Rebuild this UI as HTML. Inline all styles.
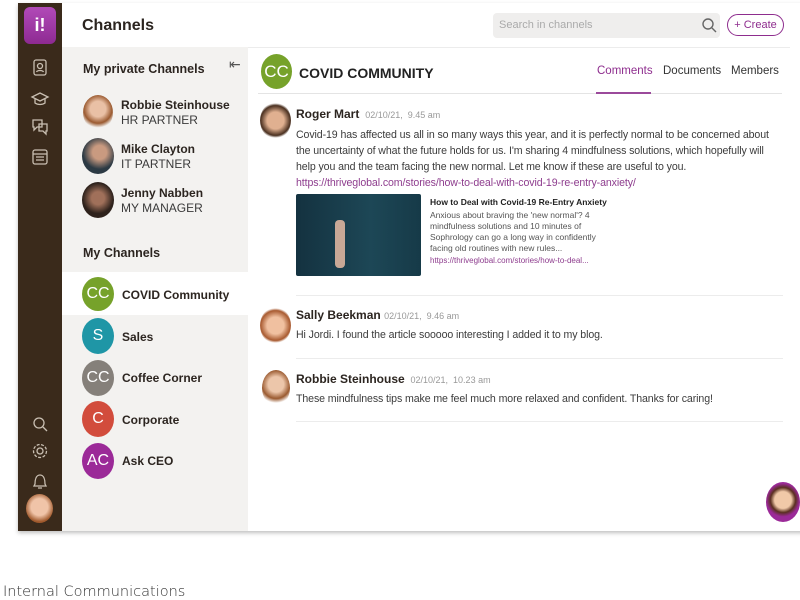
<!DOCTYPE html>
<html><head><meta charset="utf-8"><style>
*{margin:0;padding:0;box-sizing:border-box}
body{width:800px;height:600px;background:#fff;font-family:"Liberation Sans",sans-serif;position:relative;overflow:hidden;color:#2a2a2a}
.a{position:absolute}
.win{left:18px;top:3px;width:790px;height:528px;box-shadow:0 2px 4px rgba(0,0,0,.25);background:#fff}
.side{left:18px;top:3px;width:44px;height:528px;background:#3a2a1b}
.panel{left:62px;top:47px;width:186px;height:484px;background:#f3f2f0}
.b{font-weight:bold}
.av{border-radius:50%;color:#fff;font-size:16px;text-align:center}
.nm{font-size:12px;font-weight:bold;color:#2c2520}
.sub{font-size:12px;color:#3a3a3a}
.ph{border-radius:50%}
.msg{font-size:10.6px;line-height:16px;color:#3c3c3c;letter-spacing:-0.1px;white-space:nowrap}
.dt{font-size:9px;color:#999;font-weight:normal}
.ic{stroke:#c9bfb2;fill:none;stroke-width:1.3}
.ln{height:1px;background:#ececec}
</style></head><body>
<div class="a win"></div>
<div class="a side"></div>
<div class="a" style="left:24px;top:7px;width:32px;height:37px;border-radius:6px;background:linear-gradient(#b14ab8,#8e2a92);color:#fff;font-size:18px;text-align:center;line-height:37px;font-weight:bold">i!</div>
<svg class="a" style="left:30px;top:58px" width="20" height="110" viewBox="0 0 20 110">
<g class="ic"><rect x="4" y="2" width="12" height="15" rx="2"/><circle cx="10" cy="8" r="2.5"/><path d="M6.5 14c1-2 6-2 7 0"/>
<path d="M2 39l8-4 8 4-8 4z M5 41v4c3 2 7 2 10 0v-4"/>
<path d="M3 62h9v7H7l-3 3v-3H3z M9 66h8v7h-1v3l-3-3H9z"/>
<rect x="3" y="92" width="14" height="14" rx="2"/><path d="M3 96h14 M6 99h8 M6 102h8"/></g></svg>
<svg class="a" style="left:30px;top:414px" width="20" height="80" viewBox="0 0 20 80">
<g class="ic"><circle cx="9" cy="9" r="5"/><path d="M13 13l4 4"/>
<circle cx="10" cy="37" r="3"/><circle cx="10" cy="37" r="6.5" stroke-dasharray="3 1.5"/>
<path d="M5 70c0-4 1-9 5-9s5 5 5 9l1 2H4z M8 74h4"/></g></svg>
<div class="a ph" style="left:26px;top:494px;width:27px;height:29px;background:radial-gradient(circle at 50% 45%,#f0c4a8 40%,#a0592c 70%)"></div>

<div class="a b" style="left:82px;top:17px;font-size:16px;color:#2c2520">Channels</div>
<div class="a" style="left:493px;top:13px;width:227px;height:25px;background:#efeeed;border-radius:4px;font-size:11px;color:#aaa;padding:6px 6px">Search in channels</div>
<svg class="a" style="left:701px;top:17px" width="16" height="16"><circle cx="7" cy="7" r="5" stroke="#666" fill="none" stroke-width="1.4"/><path d="M11 11l4 4" stroke="#666" stroke-width="1.4"/></svg>
<div class="a" style="left:727px;top:14px;width:57px;height:22px;border:1.5px solid #8e2d8e;border-radius:12px;color:#8e2d8e;font-size:11px;text-align:center;line-height:20px">+ Create</div>
<div class="a ln" style="left:248px;top:47px;width:542px"></div>

<div class="a panel"></div>
<div class="a nm" style="left:83px;top:62px;font-size:12.5px">My private Channels</div>
<div class="a" style="left:229px;top:56px;font-size:14px;color:#555">⇤</div>
<div class="a ph" style="left:83px;top:95px;width:30px;height:35px;background:radial-gradient(circle at 50% 40%,#e9c0a5 30%,#9a5a30 55%,#f3f2f0 72%)"></div>
<div class="a nm" style="left:121px;top:98px">Robbie Steinhouse</div><div class="a sub" style="left:121px;top:113px">HR PARTNER</div>
<div class="a ph" style="left:82px;top:138px;width:32px;height:36px;background:radial-gradient(circle at 55% 40%,#c99a80 25%,#2c3a44 60%)"></div>
<div class="a nm" style="left:121px;top:142px">Mike Clayton</div><div class="a sub" style="left:121px;top:157px">IT PARTNER</div>
<div class="a ph" style="left:82px;top:182px;width:32px;height:36px;background:radial-gradient(circle at 50% 45%,#a0705a 25%,#2e221c 60%)"></div>
<div class="a nm" style="left:121px;top:186px">Jenny Nabben</div><div class="a sub" style="left:121px;top:201px">MY MANAGER</div>
<div class="a nm" style="left:83px;top:246px;font-size:12.5px">My Channels</div>
<div class="a" style="left:62px;top:272px;width:186px;height:43px;background:#fff"></div>
<div class="a av" style="left:82px;top:277px;width:32px;height:34px;line-height:34px;background:#76a22a">CC</div><div class="a nm" style="left:122px;top:288px">COVID Community</div>
<div class="a av" style="left:82px;top:318px;width:32px;height:36px;line-height:36px;background:#1f96a6">S</div><div class="a nm" style="left:122px;top:330px">Sales</div>
<div class="a av" style="left:82px;top:360px;width:32px;height:36px;line-height:36px;background:#85807a">CC</div><div class="a nm" style="left:122px;top:371px">Coffee Corner</div>
<div class="a av" style="left:82px;top:401px;width:32px;height:36px;line-height:36px;background:#d24c3c">C</div><div class="a nm" style="left:122px;top:413px">Corporate</div>
<div class="a av" style="left:82px;top:443px;width:32px;height:36px;line-height:36px;background:#9b2a98">AC</div><div class="a nm" style="left:122px;top:454px">Ask CEO</div>

<div class="a av" style="left:261px;top:54px;width:31px;height:35px;line-height:35px;background:#76a22a;font-size:17px">CC</div>
<div class="a b" style="left:299px;top:65px;font-size:14px;color:#222">COVID COMMUNITY</div>
<div class="a" style="left:597px;top:65px;font-size:11.5px;color:#8e2d8e">Comments</div>
<div class="a" style="left:663px;top:65px;font-size:11.5px;color:#333">Documents</div>
<div class="a" style="left:731px;top:65px;font-size:11.5px;color:#333">Members</div>
<div class="a ln" style="left:258px;top:93px;width:524px;background:#e4e4e4"></div>
<div class="a" style="left:596px;top:92px;width:55px;height:2px;background:#9b4a9b"></div>

<div class="a ph" style="left:260px;top:102px;width:31px;height:37px;background:radial-gradient(circle at 50% 50%,#e0b090 35%,#4a3020 62%,#fff 72%)"></div>
<div class="a nm" style="left:296px;top:107px">Roger Mart <span class="dt">&nbsp;02/10/21, &nbsp;9.45 am</span></div>
<div class="a msg" style="left:296px;top:127px">Covid-19 has affected us all in so many ways this year, and it is perfectly normal to be concerned about<br>the uncertainty of what the future holds for us. I'm sharing 4 mindfulness solutions, which hopefully will<br>help you and the team facing the new normal. Let me know if these are useful to you.<br><span style="color:#8e3d8e">https://thriveglobal.com/stories/how-to-deal-with-covid-19-re-entry-anxiety/</span></div>
<div class="a" style="left:296px;top:194px;width:125px;height:82px;background:linear-gradient(90deg,#143240,#1d4756 60%,#163a48);border-radius:2px"></div>
<div class="a" style="left:335px;top:220px;width:10px;height:48px;background:#c8a896;border-radius:4px"></div>
<div class="a b" style="left:430px;top:197px;font-size:8.5px;color:#222">How to Deal with Covid-19 Re-Entry Anxiety</div>
<div class="a" style="left:430px;top:210px;font-size:8.5px;line-height:11px;color:#555;width:170px">Anxious about braving the 'new normal'? 4 mindfulness solutions and 10 minutes of Sophrology can go a long way in confidently facing old routines with new rules...</div>
<div class="a" style="left:430px;top:256px;font-size:8px;color:#8e3d8e">https://thriveglobal.com/stories/how-to-deal...</div>
<div class="a ln" style="left:296px;top:295px;width:487px"></div>

<div class="a ph" style="left:260px;top:307px;width:31px;height:37px;background:radial-gradient(circle at 50% 50%,#f0c0a0 35%,#a85a30 62%,#fff 72%)"></div>
<div class="a nm" style="left:296px;top:308px">Sally Beekman <span class="dt">02/10/21, &nbsp;9.46 am</span></div>
<div class="a msg" style="left:296px;top:327px">Hi Jordi. I found the article sooooo interesting I added it to my blog.</div>
<div class="a ln" style="left:296px;top:358px;width:487px"></div>

<div class="a ph" style="left:262px;top:370px;width:28px;height:36px;background:radial-gradient(circle at 50% 40%,#ecc6aa 30%,#9a5a30 55%,#fff 72%)"></div>
<div class="a nm" style="left:296px;top:372px">Robbie Steinhouse <span class="dt">&nbsp;02/10/21, &nbsp;10.23 am</span></div>
<div class="a msg" style="left:296px;top:391px">These mindfulness tips make me feel much more relaxed and confident. Thanks for caring!</div>
<div class="a ln" style="left:296px;top:421px;width:487px"></div>

<div class="a ph" style="left:766px;top:482px;width:34px;height:40px;background:radial-gradient(circle at 50% 45%,#f1c9a8 30%,#5a3020 45%,#9b2a98 60%)"></div>

<div class="a" style="left:3px;top:584px;font-size:14.5px;color:#333;font-family:'DejaVu Sans',sans-serif;font-weight:300">Internal Communications</div>
</body></html>
